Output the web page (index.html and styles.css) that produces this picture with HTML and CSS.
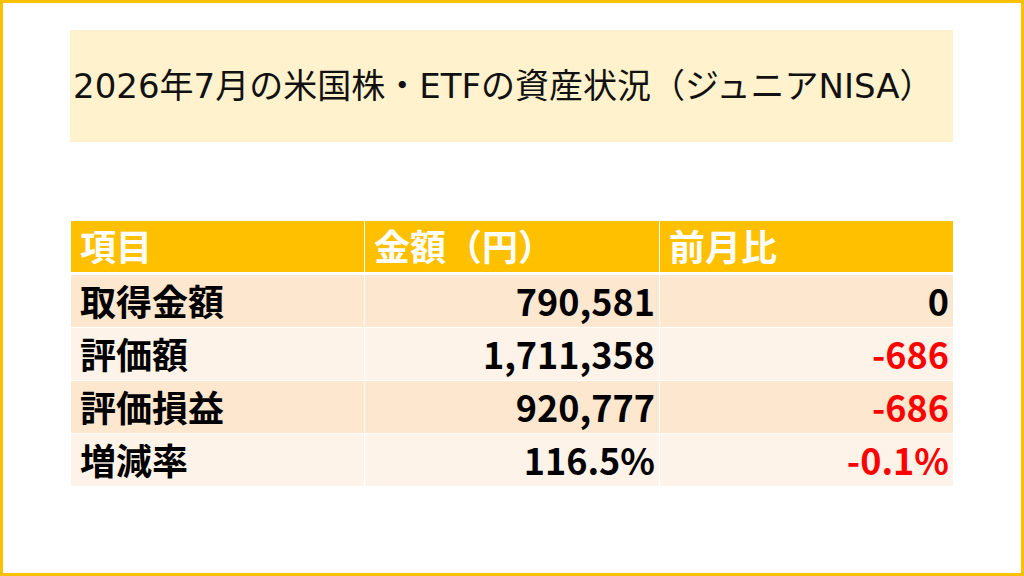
FILE: index.html
```html
<!DOCTYPE html>
<html lang="ja">
<head>
<meta charset="utf-8">
<title>2026年7月の米国株・ETFの資産状況（ジュニアNISA）</title>
<link rel="stylesheet" href="styles.css">
</head>
<body>
<div class="frame">
  <div class="title-box">
    <h1 class="title">2026年7月の米国株・ETFの資産状況（ジュニアNISA）</h1>
  </div>
  <table class="summary">
    <thead>
      <tr>
        <th class="c1">項目</th>
        <th class="c2">金額（円）</th>
        <th class="c3">前月比</th>
      </tr>
    </thead>
    <tbody>
      <tr class="band1">
        <td class="label">取得金額</td>
        <td class="num">790,581</td>
        <td class="num">0</td>
      </tr>
      <tr class="band2">
        <td class="label">評価額</td>
        <td class="num">1,711,358</td>
        <td class="num neg">-686</td>
      </tr>
      <tr class="band1">
        <td class="label">評価損益</td>
        <td class="num">920,777</td>
        <td class="num neg">-686</td>
      </tr>
      <tr class="band2">
        <td class="label">増減率</td>
        <td class="num">116.5%</td>
        <td class="num neg">-0.1%</td>
      </tr>
    </tbody>
  </table>
</div>
</body>
</html>
```

FILE: styles.css
```css
html, body {
  margin: 0;
  padding: 0;
  background: #ffffff;
}

.frame {
  box-sizing: border-box;
  width: 1024px;
  height: 576px;
  border: 3px solid #FFC000;
  padding: 27px 0 0 67px;
  display: flex;
  flex-direction: column;
  align-items: flex-start;
}

.title-box {
  width: 883px;
  height: 112px;
  background: #FFF2CC;
  display: flex;
  align-items: center;
  padding-left: 3px;
  box-sizing: border-box;
}

.title {
  margin: 0;
  font-family: "DejaVu Sans", "Noto Sans CJK JP", sans-serif;
  font-weight: normal;
  font-size: 34px;
  line-height: 1;
  color: #111111;
  white-space: nowrap;
}

.summary {
  margin-top: 79px;
  margin-left: 1px;
  width: 882px;
  border-collapse: separate;
  border-spacing: 0;
  table-layout: fixed;
  font-family: "Noto Sans CJK JP", sans-serif;
  font-weight: bold;
  font-size: 36px;
  line-height: 1;
}

.summary th {
  background: #FFC000;
  color: #ffffff;
  text-align: left;
  height: 54px;
  padding: 0 0 3px 9px;
  box-sizing: border-box;
  font-weight: bold;
  border-bottom: 3px solid #ffffff;
}

.summary th.c1 { width: 293px; }
.summary th.c2 { width: 295px; }
.summary th.c3 { width: 294px; }

.summary th + th,
.summary td + td {
  border-left: 1px solid #ffffff;
}

.summary td {
  height: 53px;
  box-sizing: border-box;
  padding: 0 4px 2px 9px;
  color: #000000;
  border-bottom: 1px solid #ffffff;
}

.band1 td { background: #FDE7CF; }
.band2 td { background: #FEF3E8; }

.summary td.num {
  text-align: right;
}

.summary td.neg {
  color: #FF0000;
}
```
